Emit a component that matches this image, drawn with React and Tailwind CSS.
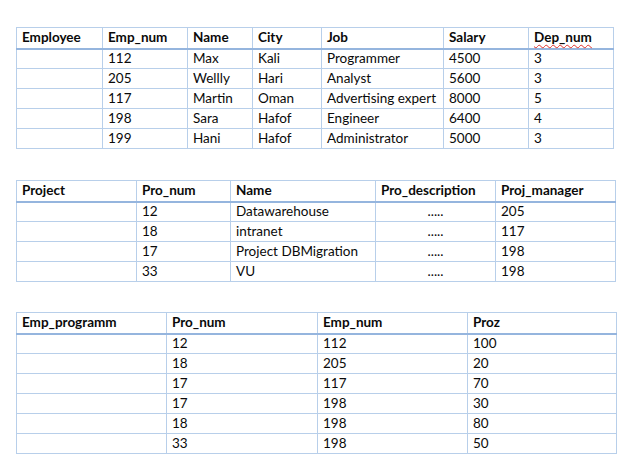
import React from 'react';

const employees = [
  ['112', 'Max', 'Kali', 'Programmer', '4500', '3'],
  ['205', 'Wellly', 'Hari', 'Analyst', '5600', '3'],
  ['117', 'Martin', 'Oman', 'Advertising expert', '8000', '5'],
  ['198', 'Sara', 'Hafof', 'Engineer', '6400', '4'],
  ['199', 'Hani', 'Hafof', 'Administrator', '5000', '3'],
];

const projects = [
  ['12', 'Datawarehouse', '.....', '205'],
  ['18', 'intranet', '.....', '117'],
  ['17', 'Project DBMigration', '.....', '198'],
  ['33', 'VU', '.....', '198'],
];

const assignments = [
  ['12', '112', '100'],
  ['18', '205', '20'],
  ['17', '117', '70'],
  ['17', '198', '30'],
  ['18', '198', '80'],
  ['33', '198', '50'],
];

// Word-style light grid table
function Grid({ widths, head, rows, center = [], wavy = [] }) {
  return (
    <table className="table-fixed border-collapse" style={{ width: widths.reduce((a, b) => a + b, 0) }}>
      <colgroup>
        {widths.map((w, i) => (
          <col key={i} style={{ width: w }} />
        ))}
      </colgroup>
      <thead>
        <tr>
          {head.map((h, i) => (
            <th
              key={i}
              className="h-[21px] border border-[#b8cfea] border-b-2 border-b-[#95b5de] px-[5px] text-left align-middle font-bold leading-none"
            >
              {wavy.includes(i) ? (
                <span className="underline decoration-wavy decoration-[#e0302a] decoration-1 underline-offset-2">{h}</span>
              ) : (
                h
              )}
            </th>
          ))}
        </tr>
      </thead>
      <tbody>
        {rows.map((r, ri) => (
          <tr key={ri}>
            {r.map((c, ci) => (
              <td
                key={ci}
                className={`h-[20px] border border-[#b8cfea] px-[5px] align-middle leading-none ${
                  center.includes(ci) ? 'text-center' : 'text-left'
                }`}
              >
                {c}
              </td>
            ))}
          </tr>
        ))}
      </tbody>
    </table>
  );
}

export default function App() {
  return (
    <div className="w-[641px] h-[459px] bg-white text-[13.5px] text-[#0a0a0a] pl-[16px] pt-[27px] flex flex-col font-['Lato',sans-serif]">
      <Grid
        widths={[86, 85, 65, 69, 122, 85, 85]}
        head={['Employee', 'Emp_num', 'Name', 'City', 'Job', 'Salary', 'Dep_num']}
        rows={employees.map((r) => ['', ...r])}
        wavy={[6]}
      />
      <div className="h-[31px]" />
      <Grid
        widths={[120, 94, 145, 120, 120]}
        head={['Project', 'Pro_num', 'Name', 'Pro_description', 'Proj_manager']}
        rows={projects.map((r) => ['', ...r])}
        center={[3]}
      />
      <div className="h-[30px]" />
      <Grid
        widths={[150, 151, 150, 149]}
        head={['Emp_programm', 'Pro_num', 'Emp_num', 'Proz']}
        rows={assignments.map((r) => ['', ...r])}
      />
    </div>
  );
}
